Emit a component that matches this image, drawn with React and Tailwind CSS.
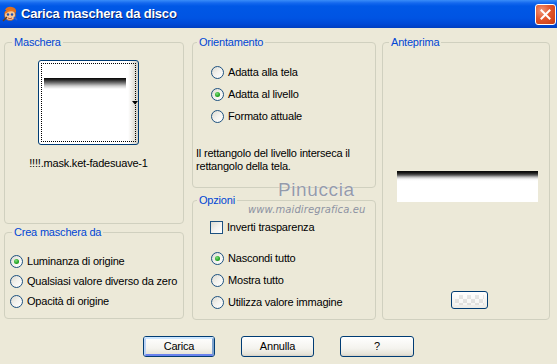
import React from "react";

function Radio({ checked }) {
  return (
    <span className="relative inline-flex w-[13px] h-[13px] shrink-0 rounded-full border border-[#1C5180] bg-[linear-gradient(135deg,#DCDAD0_0%,#F3F2EE_50%,#FFFFFF_100%)] items-center justify-center">
      {checked && (
        <span className="w-[5px] h-[5px] rounded-full bg-[radial-gradient(circle_at_40%_35%,#7FE07F_0%,#21A121_60%,#1A8A1A_100%)]" />
      )}
    </span>
  );
}

function RadioRow({ checked, label, h = "h-[22px]" }) {
  return (
    <div className={`flex items-center ${h}`}>
      <Radio checked={checked} />
      <span className="ml-[4px] whitespace-nowrap">{label}</span>
    </div>
  );
}

function XPButton({ children, def, className = "" }) {
  return (
    <div
      className={`h-[21px] rounded-[3px] border border-[#003C74] bg-[linear-gradient(to_bottom,#FFFFFF_0%,#F4F3EE_60%,#E6E3D8_90%,#D6D0C5_100%)] flex items-center justify-center ${className}`}
    >
      <div
        className={`w-full h-full flex items-center justify-center rounded-[2px] ${
          def ? "border-[2px] border-[#8FB6F0] border-t-[#CEE7FF] border-l-[#BCD4F6] border-b-[#6982EE] border-r-[#7DA2CE]" : ""
        }`}
      >
        {children}
      </div>
    </div>
  );
}

export default function App() {
  return (
    <div className="relative w-[557px] h-[364px] overflow-hidden bg-[#ECE9D8] text-[11px] leading-[13px] tracking-[-0.2px] text-black font-['Liberation_Sans',Arial,sans-serif]">
      {/* Title bar */}
      <div className="h-[28px] flex items-center bg-[linear-gradient(to_bottom,#3A8DF8_0px,#1468EE_3px,#0058E6_6px,#0054E3_18px,#0049D6_24px,#003FC0_28px)]">
        <svg width="16" height="16" viewBox="0 0 16 16" className="ml-[2px] mt-[-1px]">
          <path d="M3 4 Q5 0 10 1 Q15 2 14 7 L12 6 Q10 3 6 4 Z" fill="#E0701C" />
          <ellipse cx="8" cy="9" rx="5.5" ry="5.5" fill="#F6C89A" stroke="#A0501A" strokeWidth="0.7" />
          <path d="M2.5 7 Q4 3 9 3 Q12 3 13.5 6 L11 5.5 Q7 4.5 4 7.5 Z" fill="#E8761E" />
          <circle cx="6" cy="8.5" r="1.2" fill="#1E4FB0" />
          <circle cx="10" cy="8.5" r="1.2" fill="#1E4FB0" />
          <path d="M6 12 Q8 13.5 10 12" stroke="#B0301A" strokeWidth="0.8" fill="none" />
          <path d="M1 15 L5 11" stroke="#6A3A10" strokeWidth="1.4" />
          <path d="M12 11 L15 14" stroke="#2A62D8" strokeWidth="1.6" />
        </svg>
        <span className="ml-[3px] mt-[-1px] text-white font-bold text-[13px] tracking-[-0.2px] font-['Liberation_Sans',Arial,sans-serif] [text-shadow:1px_1px_0_#0A246A]">
          Carica maschera da disco
        </span>
        <div className="ml-auto mr-[1px] mt-[1px] w-[21px] h-[21px] rounded-[3px] border border-white bg-[radial-gradient(circle_at_30%_30%,#F0977A_0%,#E2562C_45%,#C73A12_100%)] flex items-center justify-center">
          <svg width="11" height="11" viewBox="0 0 11 11">
            <path d="M1.5 1.5 L9.5 9.5 M9.5 1.5 L1.5 9.5" stroke="white" strokeWidth="2" strokeLinecap="square" />
          </svg>
        </div>
      </div>

      {/* Body */}
      <div className="flex pl-[4px] pt-[8px]">
        {/* Column 1 */}
        <div className="w-[180px] flex flex-col">
          <fieldset className="h-[188px] border border-[#D0D0BF] rounded-[4px] p-0 m-0">
            <legend className="ml-[7px] px-[2px] text-[#0046D5]">Maschera</legend>
            <div className="ml-[33px] mt-[11px] w-[101px] flex flex-col items-center">
              <div className="relative w-[101px] h-[85px] rounded-[3px] border border-[#003C74] bg-[linear-gradient(to_right,#FFFFFF_0%,#FFFFFF_90%,#E4E2DA_96%,#D4D0C6_100%)] p-[2px]">
                <div className="w-full h-full border border-dotted border-black pt-[14px] pl-[2px]">
                  <div className="w-[82px] h-[11px] bg-[linear-gradient(to_bottom,#050505_0px,#2a2a2a_2px,#777_5px,#cfcfcf_8px,#fff_11px)]" />
                </div>
                <svg width="6" height="4" viewBox="0 0 6 4" className="absolute left-[93px] top-[40px]">
                  <path d="M0 0 L6 0 L3 3.5 Z" fill="black" />
                </svg>
              </div>
              <div className="mt-[12px] whitespace-nowrap">!!!!.mask.ket-fadesuave-1</div>
            </div>
          </fieldset>
          <fieldset className="mt-[2px] h-[93px] border border-[#D0D0BF] rounded-[4px] p-0 m-0">
            <legend className="ml-[7px] px-[2px] text-[#0046D5]">Crea maschera da</legend>
            <div className="pl-[5px] mt-[12px]">
              <RadioRow checked label="Luminanza di origine" h="h-[20px]" />
              <RadioRow label="Qualsiasi valore diverso da zero" h="h-[20px]" />
              <RadioRow label="Opacità di origine" h="h-[20px]" />
            </div>
          </fieldset>
        </div>

        {/* Column 2 */}
        <div className="ml-[8px] w-[184px] flex flex-col">
          <fieldset className="h-[152px] border border-[#D0D0BF] rounded-[4px] p-0 m-0">
            <legend className="ml-[4px] px-[2px] text-[#0046D5]">Orientamento</legend>
            <div className="pl-[18px] mt-[12px]">
              <RadioRow label="Adatta alla tela" />
              <RadioRow checked label="Adatta al livello" />
              <RadioRow label="Formato attuale" />
            </div>
            <p className="mt-[20px] pl-[3px] leading-[13px]">
              Il rettangolo del livello interseca il
              <br />
              rettangolo della tela.
            </p>
          </fieldset>
          <fieldset className="mt-[6px] h-[126px] border border-[#D0D0BF] rounded-[4px] p-0 m-0">
            <legend className="ml-[4px] px-[2px] text-[#0046D5]">Opzioni</legend>
            <div className="pl-[17px] mt-[10px]">
              <div className="flex items-center h-[20px]">
                <span className="w-[13px] h-[13px] border border-[#1C5180] bg-[linear-gradient(135deg,#DCDAD0_0%,#F3F2EE_50%,#FFFFFF_100%)]" />
                <span className="ml-[4px] whitespace-nowrap">Inverti trasparenza</span>
              </div>
              <div className="mt-[10px] pl-[1px]">
                <RadioRow checked label="Nascondi tutto" />
                <RadioRow label="Mostra tutto" />
                <RadioRow label="Utilizza valore immagine" />
              </div>
            </div>
          </fieldset>
        </div>

        {/* Column 3 */}
        <div className="ml-[6px] w-[168px]">
          <fieldset className="h-[284px] border border-[#D0D0BF] rounded-[4px] p-0 m-0">
            <legend className="ml-[6px] px-[2px] text-[#0046D5]">Anteprima</legend>
            <div className="ml-[14px] mt-[122px] w-[141px] h-[31px] bg-[linear-gradient(to_bottom,#050505_0px,#1a1a1a_2px,#555_4px,#bbb_6px,#f4f4f4_8px,#fff_10px)]" />
            <div className="ml-[68px] mt-[89px] w-[37px] h-[18px] rounded-[3px] border border-[#003C74] bg-[linear-gradient(to_bottom,#FFFFFF,#ECEBE6)] p-[3px]">
              <div className="w-full h-full opacity-40 bg-[repeating-conic-gradient(#C8C8C8_0_25%,#FFFFFF_0_50%)] bg-[length:8px_8px]" />
            </div>
          </fieldset>
        </div>
      </div>

      {/* Buttons */}
      <div className="flex pl-[143px] mt-[16px]">
        <XPButton def className="w-[72px]">Carica</XPButton>
        <XPButton className="ml-[26px] w-[73px]">Annulla</XPButton>
        <XPButton className="ml-[26px] w-[74px]">?</XPButton>
      </div>

      {/* Watermark */}
      <div className="absolute left-[278px] top-[179px] text-[19px] leading-[22px] tracking-[0.6px] text-[#959BAA] font-['Liberation_Sans',Arial,sans-serif] [text-shadow:0_0_1px_#FFFFFF]">
        Pinuccia
      </div>
      <div className="absolute left-[248px] top-[203px] text-[10px] leading-[13px] tracking-[0.1px] italic text-[#8C92A2] font-['DejaVu_Sans',sans-serif]">
        www.maidiregrafica.eu
      </div>
    </div>
  );
}
